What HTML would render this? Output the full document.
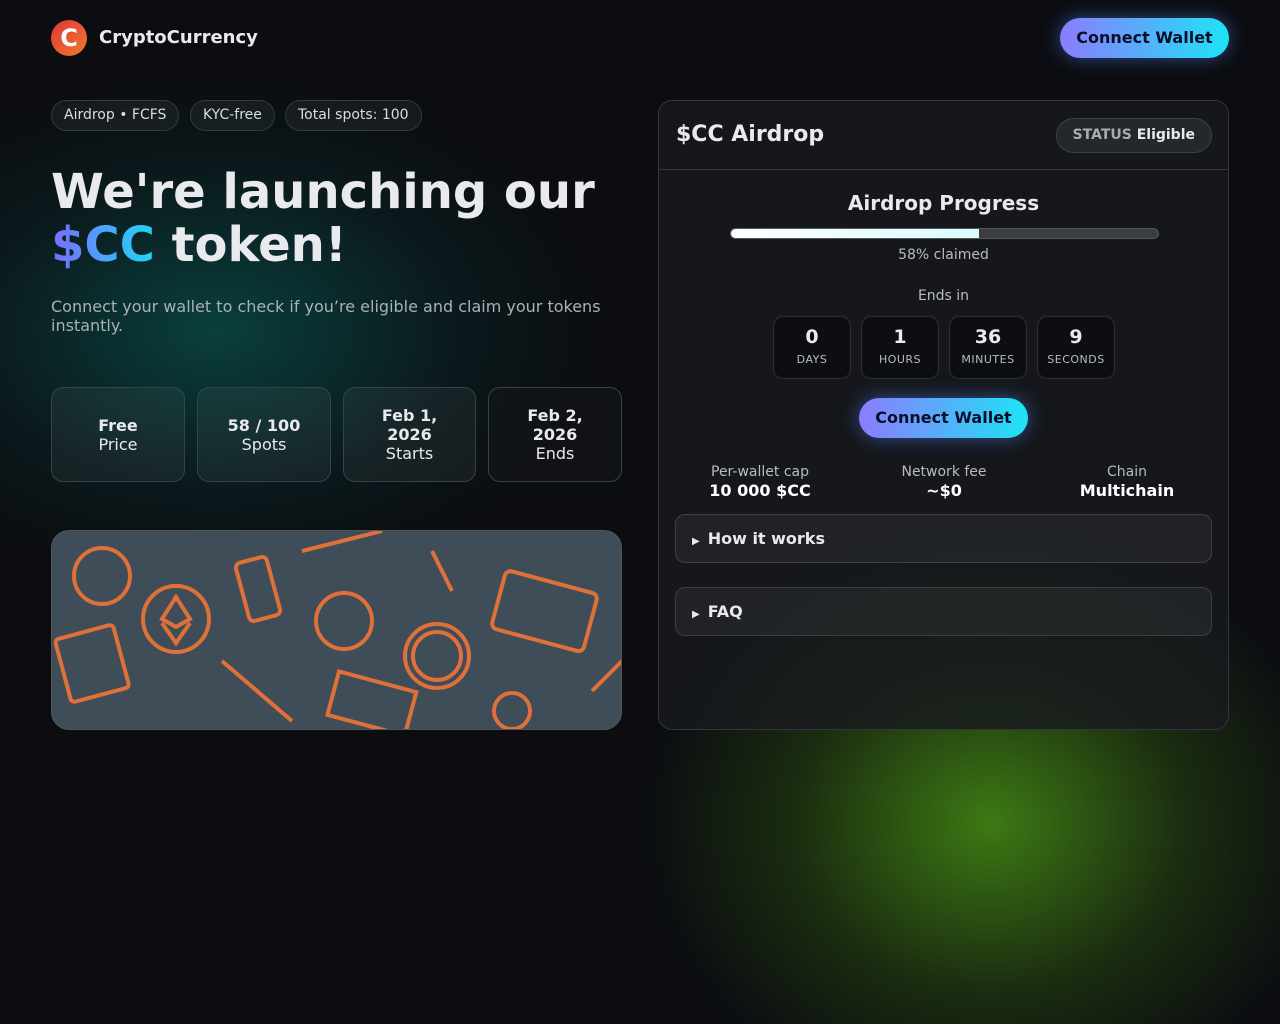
<!DOCTYPE html>
<html><head><style>
*{box-sizing:border-box;margin:0;padding:0}
html,body{width:1280px;height:1024px;overflow:hidden}
body{background:#0b0d11;font-family:"DejaVu Sans","Liberation Sans",sans-serif;color:#e8eaee;position:relative}
.g1{position:absolute;left:-100px;top:80px;width:700px;height:500px;background:radial-gradient(ellipse at 45% 50%,rgba(10,90,85,.65),rgba(10,60,60,.25) 45%,transparent 70%)}
.g2{position:absolute;left:640px;top:520px;width:700px;height:504px;background:radial-gradient(ellipse at 50% 60%,rgba(70,140,20,.85),rgba(50,90,15,.4) 40%,transparent 70%)}
.logo{position:absolute;left:51px;top:20px;width:36px;height:36px;border-radius:50%;background:linear-gradient(135deg,#e0363a,#f07a2e);color:#fff;font-weight:bold;font-size:24px;text-align:center;line-height:36px}
.brand{position:absolute;left:99px;top:27px;font-weight:bold;font-size:18px}
.btn{position:absolute;border-radius:20px;background:linear-gradient(90deg,#8b7cff,#1ee3f5);color:#0c0d2a;font-weight:bold;font-size:16px;text-align:center;box-shadow:0 0 18px rgba(80,140,255,.5)}
.chip{position:absolute;top:100px;height:31px;border:1px solid #2f3c40;border-radius:16px;background:rgba(255,255,255,.05);font-size:14px;line-height:29px;padding:0 12px;color:#d8dde0}
h1{position:absolute;left:51px;top:166px;font-size:48px;line-height:53px;font-weight:bold;letter-spacing:0}
.cc{background:linear-gradient(90deg,#7b6cff,#1ed8f5);-webkit-background-clip:text;color:transparent}
.sub{position:absolute;left:51px;top:297px;width:570px;font-size:16px;color:#a8b2b8;line-height:19px}
.stat{position:absolute;top:387px;height:95px;border:1px solid #34444a;border-radius:12px;background:rgba(255,255,255,.05);text-align:center;display:flex;flex-direction:column;justify-content:center;font-size:16px;line-height:19px}
.stat b{display:block}
.img{position:absolute;left:51px;top:530px;width:571px;height:200px;border-radius:18px;background:#3e4d58;overflow:hidden;border:1px solid #555}
.card{position:absolute;left:658px;top:100px;width:571px;height:630px;border:1px solid #33373d;border-radius:14px;background:rgba(24,26,30,.8)}
.ct{position:absolute;left:17px;top:21px;font-size:22px;font-weight:bold}
.st{position:absolute;right:16px;top:17px;height:35px;border:1px solid #3d4248;border-radius:18px;background:#24272b;padding:0 16px;line-height:33px;font-size:14px;font-weight:bold}
.hr{position:absolute;left:0;right:0;top:68px;border-top:1px solid #33373d}
.cd{position:absolute;top:215px;width:78px;height:63px;border:1px solid #2c3036;border-radius:10px;background:#0c0e12;text-align:center}
.cd b{display:block;font-size:19px;margin-top:9px}
.cd span{font-size:11px;color:#b8bcc2;letter-spacing:.5px}
.acc{position:absolute;left:16px;width:537px;height:49px;border:1px solid #3c4045;border-radius:10px;background:rgba(255,255,255,.05);font-size:16px;font-weight:bold;line-height:47px;padding-left:16px}
.acc i{font-style:normal;font-size:10px;margin-right:8px}
.info{position:absolute;top:363px;text-align:center;font-size:14px;color:#b8bcc2;width:180px}
.info b{display:block;font-size:16px;color:#fff;margin-top:1px}
</style></head><body>
<div class="g1"></div><div class="g2"></div>
<div class="logo">C</div><div class="brand">CryptoCurrency</div>
<div class="btn" style="left:1060px;top:18px;width:169px;height:40px;line-height:40px">Connect Wallet</div>
<div class="chip" style="left:51px">Airdrop • FCFS</div>
<div class="chip" style="left:190px">KYC-free</div>
<div class="chip" style="left:285px">Total spots: 100</div>
<h1>We're launching our<br><span class="cc">$CC</span> token!</h1>
<div class="sub">Connect your wallet to check if you’re eligible and claim your tokens instantly.</div>
<div class="stat" style="left:51px;width:134px"><b>Free</b>Price</div>
<div class="stat" style="left:197px;width:134px"><b>58 / 100</b>Spots</div>
<div class="stat" style="left:343px;width:133px"><b>Feb 1,<br>2026</b>Starts</div>
<div class="stat" style="left:488px;width:134px;background:rgba(20,22,26,.6)"><b>Feb 2,<br>2026</b>Ends</div>
<div class="img"><svg width="571" height="200" fill="none" stroke="#e0703a" stroke-width="4">
<circle cx="124" cy="88" r="33"/><path d="M124 66l-14 22 14 8 14-8zM110 92l14 20 14-20"/>
<circle cx="292" cy="90" r="28"/><circle cx="385" cy="125" r="32"/><circle cx="385" cy="125" r="24"/>
<circle cx="50" cy="45" r="28"/><rect x="190" y="28" width="32" height="60" rx="5" transform="rotate(-15 206 58)"/>
<rect x="445" y="50" width="95" height="60" rx="6" transform="rotate(15 492 80)"/>
<path d="M170 130l70 60M250 20l80 -20"/><rect x="10" y="100" width="60" height="65" rx="4" transform="rotate(-15 40 132)"/>
<rect x="280" y="150" width="80" height="45" transform="rotate(15 320 172)"/><circle cx="460" cy="180" r="18"/>
<path d="M540 160l30-30M380 20l20 40"/></svg></div>
<div class="card">
<div class="ct">$CC Airdrop</div>
<div class="st"><span style="color:#a8acb2">STATUS</span> Eligible</div>
<div class="hr"></div>
<div style="position:absolute;left:0;right:0;top:90px;text-align:center;font-size:20px;font-weight:bold">Airdrop Progress</div>
<div style="position:absolute;left:71px;top:127px;width:429px;height:11px;border-radius:6px;background:#3a3d42;border:1px solid #55585d;overflow:hidden"><div style="width:58%;height:100%;background:linear-gradient(90deg,#fff,#d8fbff)"></div></div>
<div style="position:absolute;left:0;right:0;top:146px;text-align:center;font-size:14px;color:#b8bcc2">58% claimed</div>
<div style="position:absolute;left:0;right:0;top:187px;text-align:center;font-size:14px;color:#b8bcc2">Ends in</div>
<div class="cd" style="left:114px"><b>0</b><span>DAYS</span></div>
<div class="cd" style="left:202px"><b>1</b><span>HOURS</span></div>
<div class="cd" style="left:290px"><b>36</b><span>MINUTES</span></div>
<div class="cd" style="left:378px"><b>9</b><span>SECONDS</span></div>
<div class="btn" style="left:200px;top:297px;width:169px;height:40px;line-height:40px">Connect Wallet</div>
<div class="info" style="left:11px">Per-wallet cap<b>10 000 $CC</b></div>
<div class="info" style="left:195px">Network fee<b>~$0</b></div>
<div class="info" style="left:378px">Chain<b>Multichain</b></div>
<div class="acc" style="top:413px"><i>▶</i>How it works</div>
<div class="acc" style="top:486px"><i>▶</i>FAQ</div>
</div>
</body></html>
